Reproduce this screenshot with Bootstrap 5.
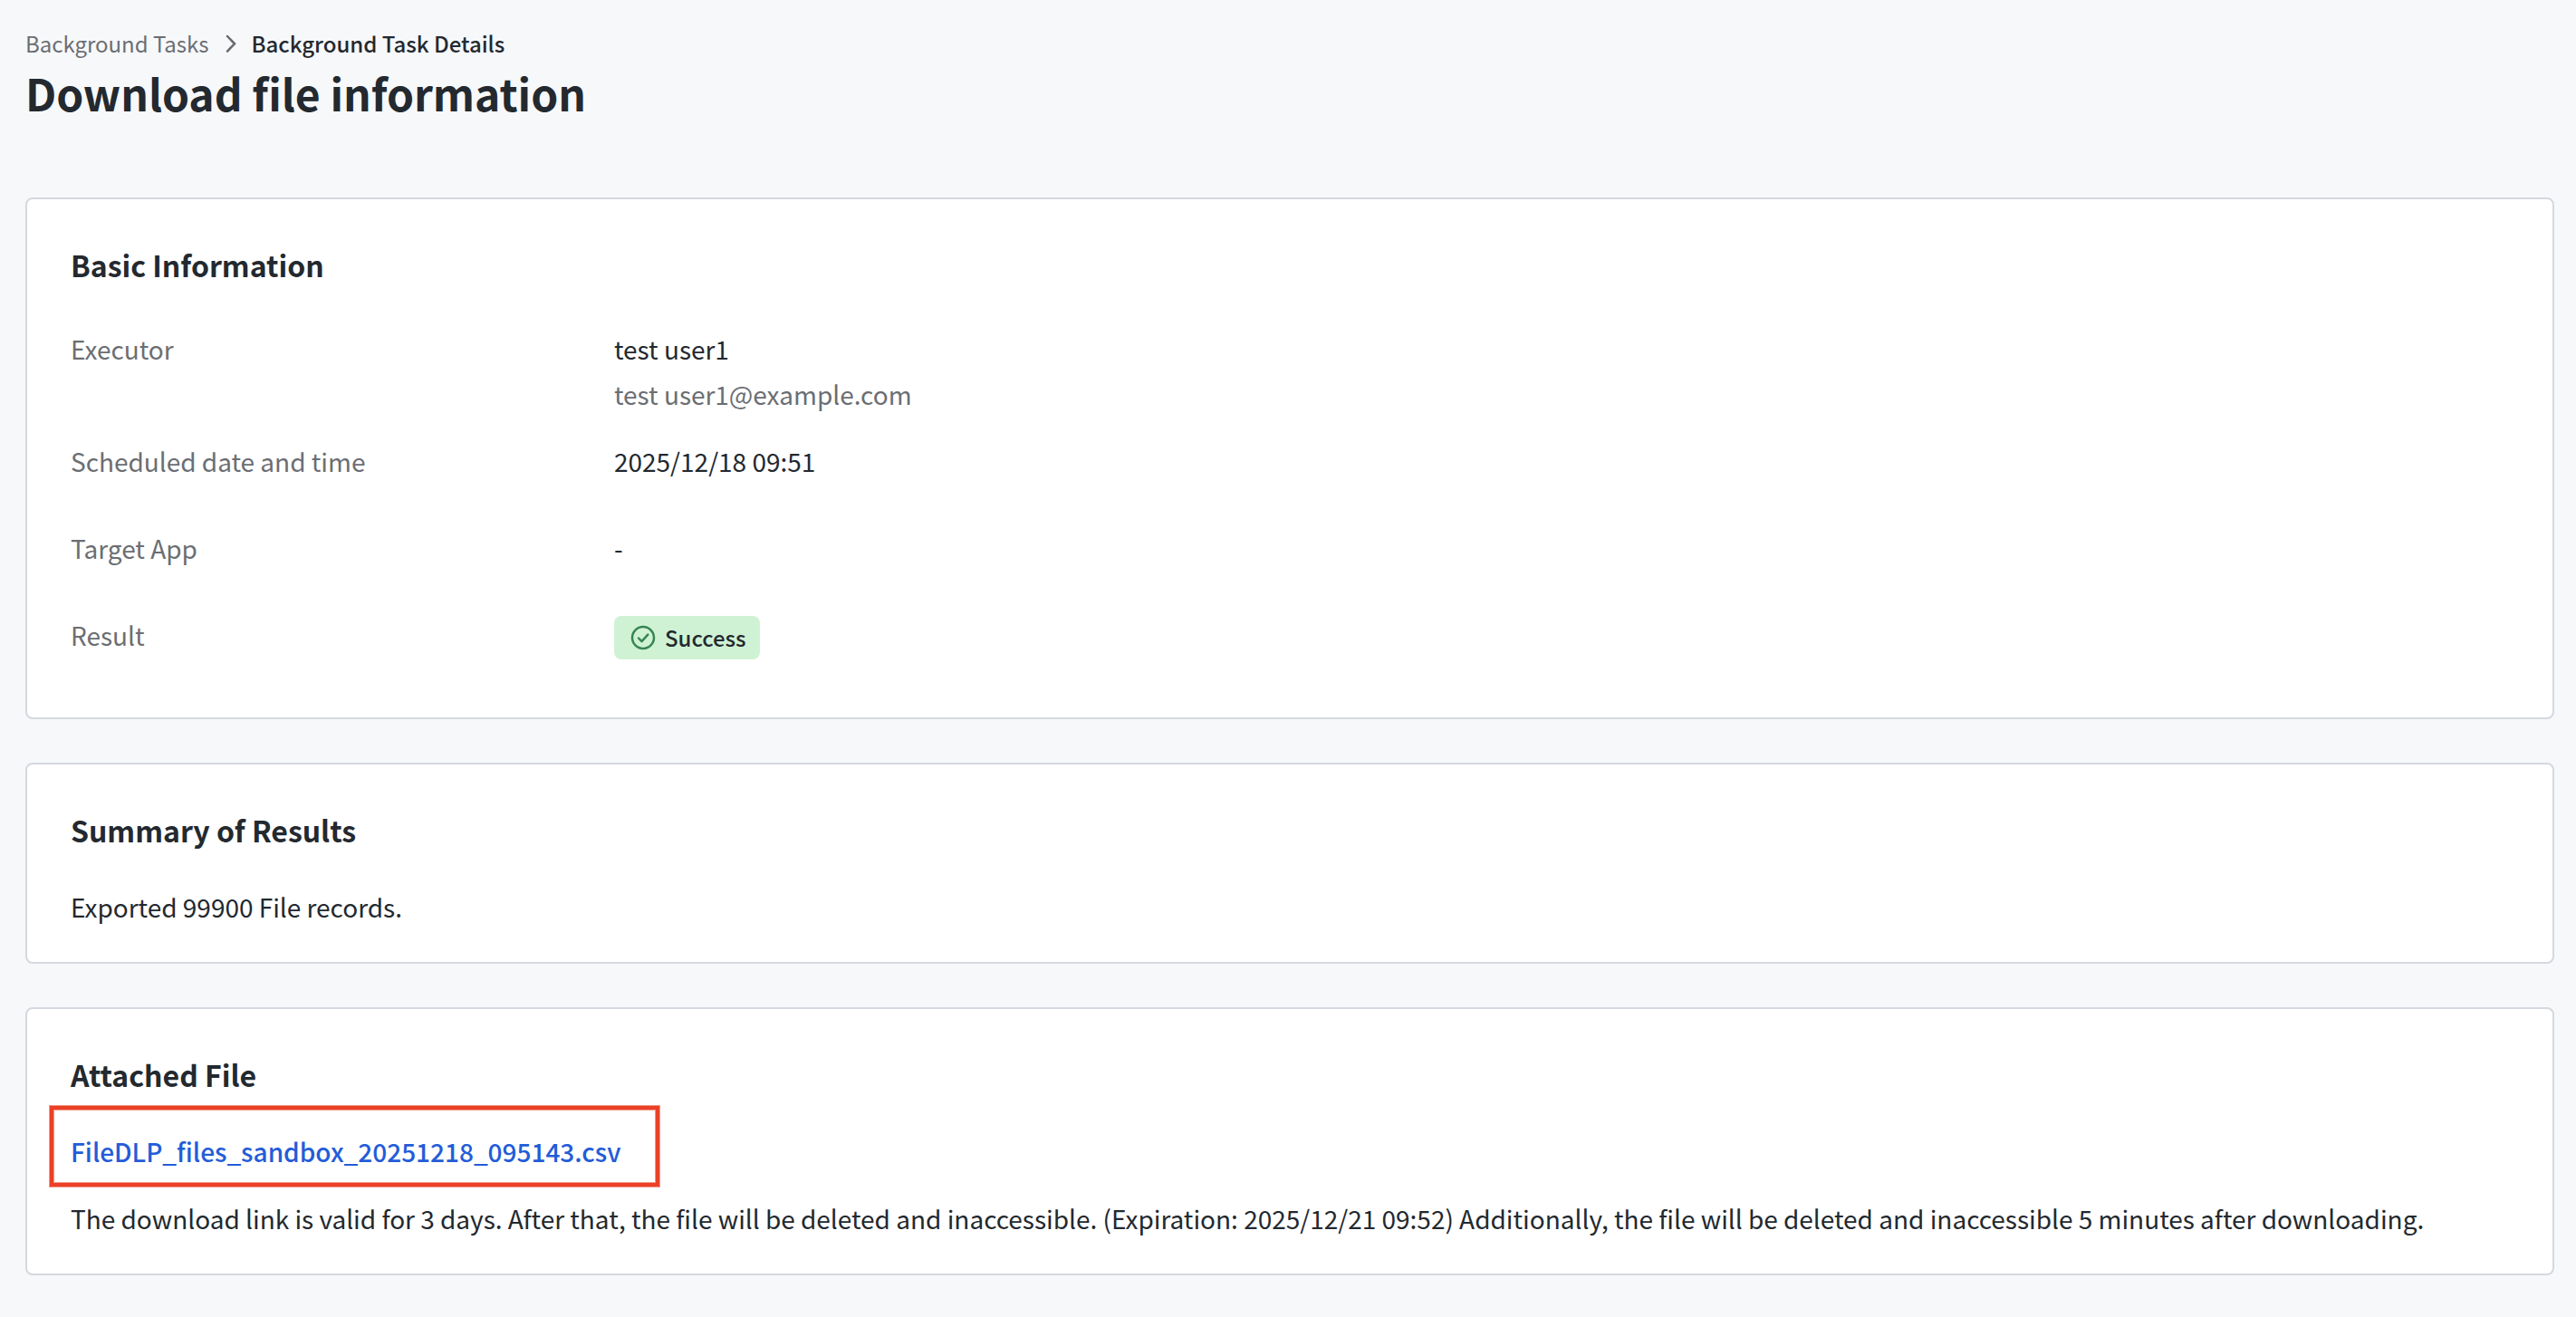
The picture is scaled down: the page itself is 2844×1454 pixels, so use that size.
<!DOCTYPE html>
<html lang="en">
<head>
<meta charset="utf-8">
<meta name="viewport" content="width=device-width, initial-scale=1">
<title>Download file information</title>
<link href="https://cdn.jsdelivr.net/npm/bootstrap@5.3.0/dist/css/bootstrap.min.css" rel="stylesheet">
<style>
body{background:#f7f8fa;color:#23292f;font-family:"Noto Sans CJK JP","Noto Sans",sans-serif;font-size:28px;line-height:50px;letter-spacing:-.013px}
.page{padding:28px 24px 0 28px}
.crumbs{font-size:24px;line-height:39px}
.crumbs svg{width:12px;height:20px;margin:0 17px 0 18px}
.muted{color:#6b6e73}
.semi{font-weight:500}
.title{font-size:48px;line-height:70px;font-weight:700;letter-spacing:-.05px;margin:0 0 81px}
.panel{border:2px solid #d6d8e0;border-radius:8px;background:#fff;padding:48px 48px 36px;margin-bottom:48px}
.panel-info{padding-bottom:44px}
.heading{font-size:32px;line-height:48px;font-weight:700;margin:0 0 36px}
.facts{gap:24px;margin-top:44px}
.fact{min-height:72px}
.term{width:600px;flex:none;font-weight:400}
.status{background:#d0f2d4;border-radius:8px;width:161px;height:48px;margin-top:4px;padding-left:18px;gap:10px;font-size:24px;line-height:50px;font-weight:500}
.status svg{width:28px;height:28px}
.file{font-weight:500;color:#235cd8;text-decoration:none}
.file-line{margin-bottom:24px}
.callout-frame{position:absolute;left:-23px;top:-25px;width:673px;height:89px;border:4px solid #eb4026;box-shadow:0 0 0 1px rgba(235,64,38,.55),inset 0 0 0 1px rgba(235,64,38,.55);pointer-events:none}
</style>
</head>
<body>
<main class="page">
  <nav class="crumbs d-flex align-items-center" aria-label="breadcrumb">
    <a class="muted text-decoration-none" href="#">Background Tasks</a>
    <svg viewBox="0 0 12 20" fill="none" stroke="#66696e" stroke-width="2.5" stroke-linecap="round"><path d="M2 2l8 8.3-8 8.3"/></svg>
    <span class="semi">Background Task Details</span>
  </nav>
  <h1 class="title">Download file information</h1>

  <section class="panel panel-info">
    <h2 class="heading">Basic Information</h2>
    <dl class="facts d-flex flex-column mb-0">
      <div class="fact d-flex"><dt class="term muted">Executor</dt><dd class="mb-0">test user1<div class="muted">test user1@example.com</div></dd></div>
      <div class="fact d-flex"><dt class="term muted">Scheduled date and time</dt><dd class="mb-0">2025/12/18 09:51</dd></div>
      <div class="fact d-flex"><dt class="term muted">Target App</dt><dd class="mb-0">-</dd></div>
      <div class="fact d-flex"><dt class="term muted">Result</dt><dd class="mb-0">
        <div class="status d-flex align-items-center">
          <svg viewBox="0 0 28 28" fill="none" stroke="#378555" stroke-width="2.5" stroke-linecap="round" stroke-linejoin="round"><circle cx="14" cy="14" r="12"/><path d="M9 14.5l3.5 3.7 6.8-7.6"/></svg>
          <span>Success</span>
        </div></dd></div>
    </dl>
  </section>

  <section class="panel">
    <h2 class="heading">Summary of Results</h2>
    <p class="mb-0">Exported 99900 File records.</p>
  </section>

  <section class="panel mb-0">
    <h2 class="heading">Attached File</h2>
    <div class="file-line position-relative"><a class="file" href="#">FileDLP_files_sandbox_20251218_095143.csv</a><span class="callout-frame"></span></div>
    <p class="mb-0">The download link is valid for 3 days. After that, the file will be deleted and inaccessible. (Expiration: 2025/12/21 09:52) Additionally, the file will be deleted and inaccessible 5 minutes after downloading.</p>
  </section>
</main>
<script src="https://cdn.jsdelivr.net/npm/bootstrap@5.3.0/dist/js/bootstrap.bundle.min.js"></script>
</body>
</html>
